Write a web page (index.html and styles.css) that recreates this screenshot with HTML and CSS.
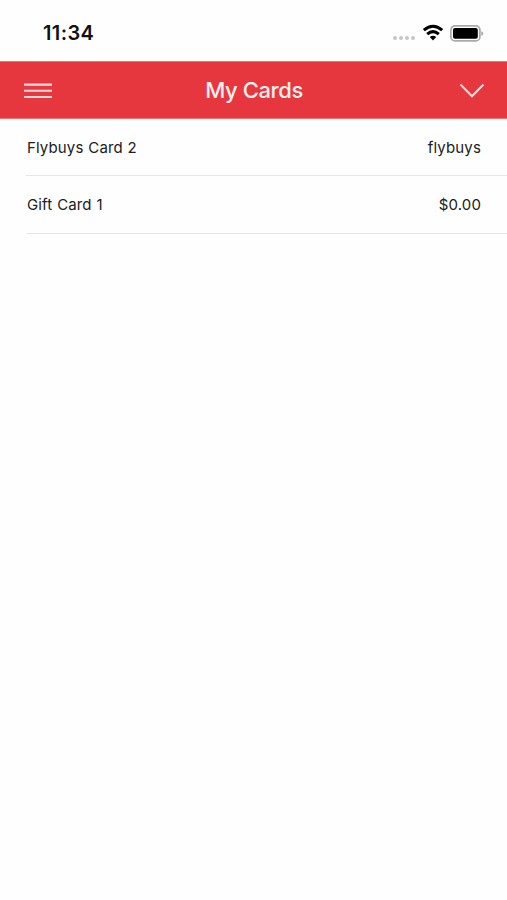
FILE: index.html
```html
<!DOCTYPE html>
<html lang="en">
<head>
  <meta charset="UTF-8">
  <meta name="viewport" content="width=device-width, initial-scale=1.0">
  <title>My Cards</title>
  <link rel="stylesheet" href="styles.css">
</head>
<body>
  <div class="status-bar">
    <span class="time">11:34</span>
    <div class="status-icons">
      <svg class="signal" width="24" height="6" viewBox="0 0 24 6">
        <circle cx="3" cy="3" r="2"/>
        <circle cx="9" cy="3" r="2"/>
        <circle cx="15" cy="3" r="2"/>
        <circle cx="21" cy="3" r="2"/>
      </svg>
      <svg class="wifi" width="22" height="18" viewBox="0 0 22 18">
        <path class="wave" d="M1.8 6.2 Q11 -1.8 20.2 6.2"/>
        <path class="wave" d="M5.2 10.2 Q11 5 16.8 10.2"/>
        <path d="M7.8 13 Q11 10.4 14.2 13 L11 16.4 Z"/>
      </svg>
      <svg class="battery" width="34" height="17" viewBox="0 0 34 17">
        <rect class="shell" x="0.9" y="0.9" width="29" height="15" rx="4"/>
        <rect x="3" y="3" width="24.8" height="10.8" rx="2"/>
        <path class="cap" d="M31.3 6 Q33.3 7 33.3 8.5 Q33.3 10 31.3 11 Z"/>
      </svg>
    </div>
  </div>

  <header class="nav-bar">
    <button class="nav-button" type="button" aria-label="Menu">
      <svg width="28" height="16" viewBox="0 0 28 16">
        <path d="M0 1.6 H28 M0 7.8 H28 M0 14 H28"/>
      </svg>
    </button>
    <h1>My Cards</h1>
    <button class="nav-button" type="button" aria-label="More">
      <svg width="26" height="16" viewBox="0 0 26 16">
        <path d="M1.5 1.5 L13 13.2 L24.5 1.5"/>
      </svg>
    </button>
  </header>

  <ul class="card-list">
    <li class="card-row">
      <span class="card-name">Flybuys Card 2</span>
      <span class="card-value">flybuys</span>
    </li>
    <li class="card-row">
      <span class="card-name">Gift Card 1</span>
      <span class="card-value">$0.00</span>
    </li>
  </ul>
</body>
</html>
```
FILE: styles.css
```css
* {
  box-sizing: border-box;
}
body {
  margin: 0;
  min-height: 100vh;
  background-color: #fefefe;
  color: #202020;
  font-family: Inter, "Liberation Sans", sans-serif;
}
.status-bar {
  display: flex;
  align-items: center;
  justify-content: space-between;
  height: 61px;
  padding: 5px 23px 0 43px;
}
.time {
  color: #111;
  font-size: 20px;
  font-weight: 600;
  line-height: 24px;
  letter-spacing: 0.4px;
}
.status-icons {
  display: flex;
  align-items: center;
}
.signal {
  margin-top: 10px;
  fill: #c6c6c6;
}
.wifi {
  margin-left: 6px;
}
.wave {
  fill: none;
  stroke: #000;
  stroke-width: 3;
}
.battery {
  margin-left: 6px;
}
.shell {
  fill: none;
  stroke: #aaa;
  stroke-width: 1.7;
}
.cap {
  fill: #aaa;
}
.nav-bar {
  display: flex;
  align-items: center;
  justify-content: space-between;
  height: 58px;
  padding: 2px 22px 0 24px;
  background-color: #e6373f;
  border-top: 1px solid #ec737a;
  border-bottom: 1px solid #ec737a;
  color: #fff0f0;
}
.nav-bar h1 {
  margin: 0 3px 2px 0;
  font-size: 22px;
  font-weight: 500;
  line-height: 28px;
  letter-spacing: -0.4px;
}
.nav-button {
  display: flex;
  padding: 0;
  border: none;
  background: none;
  color: #fdd9da;
  cursor: pointer;
}
.nav-button svg {
  fill: none;
  stroke: currentColor;
  stroke-width: 2.1;
}
.card-list {
  margin: 0;
  padding: 0 0 0 26px;
  list-style: none;
}
.card-row {
  display: flex;
  align-items: center;
  justify-content: space-between;
  height: 57px;
  padding: 2px 26px 0 1px;
  border-bottom: 1px solid #e6e6e6;
  font-size: 15px;
  line-height: 20px;
  letter-spacing: 0.15px;
  word-spacing: 0.4px;
}
.card-row:last-child {
  height: 58px;
  padding-bottom: 1px;
}
```
